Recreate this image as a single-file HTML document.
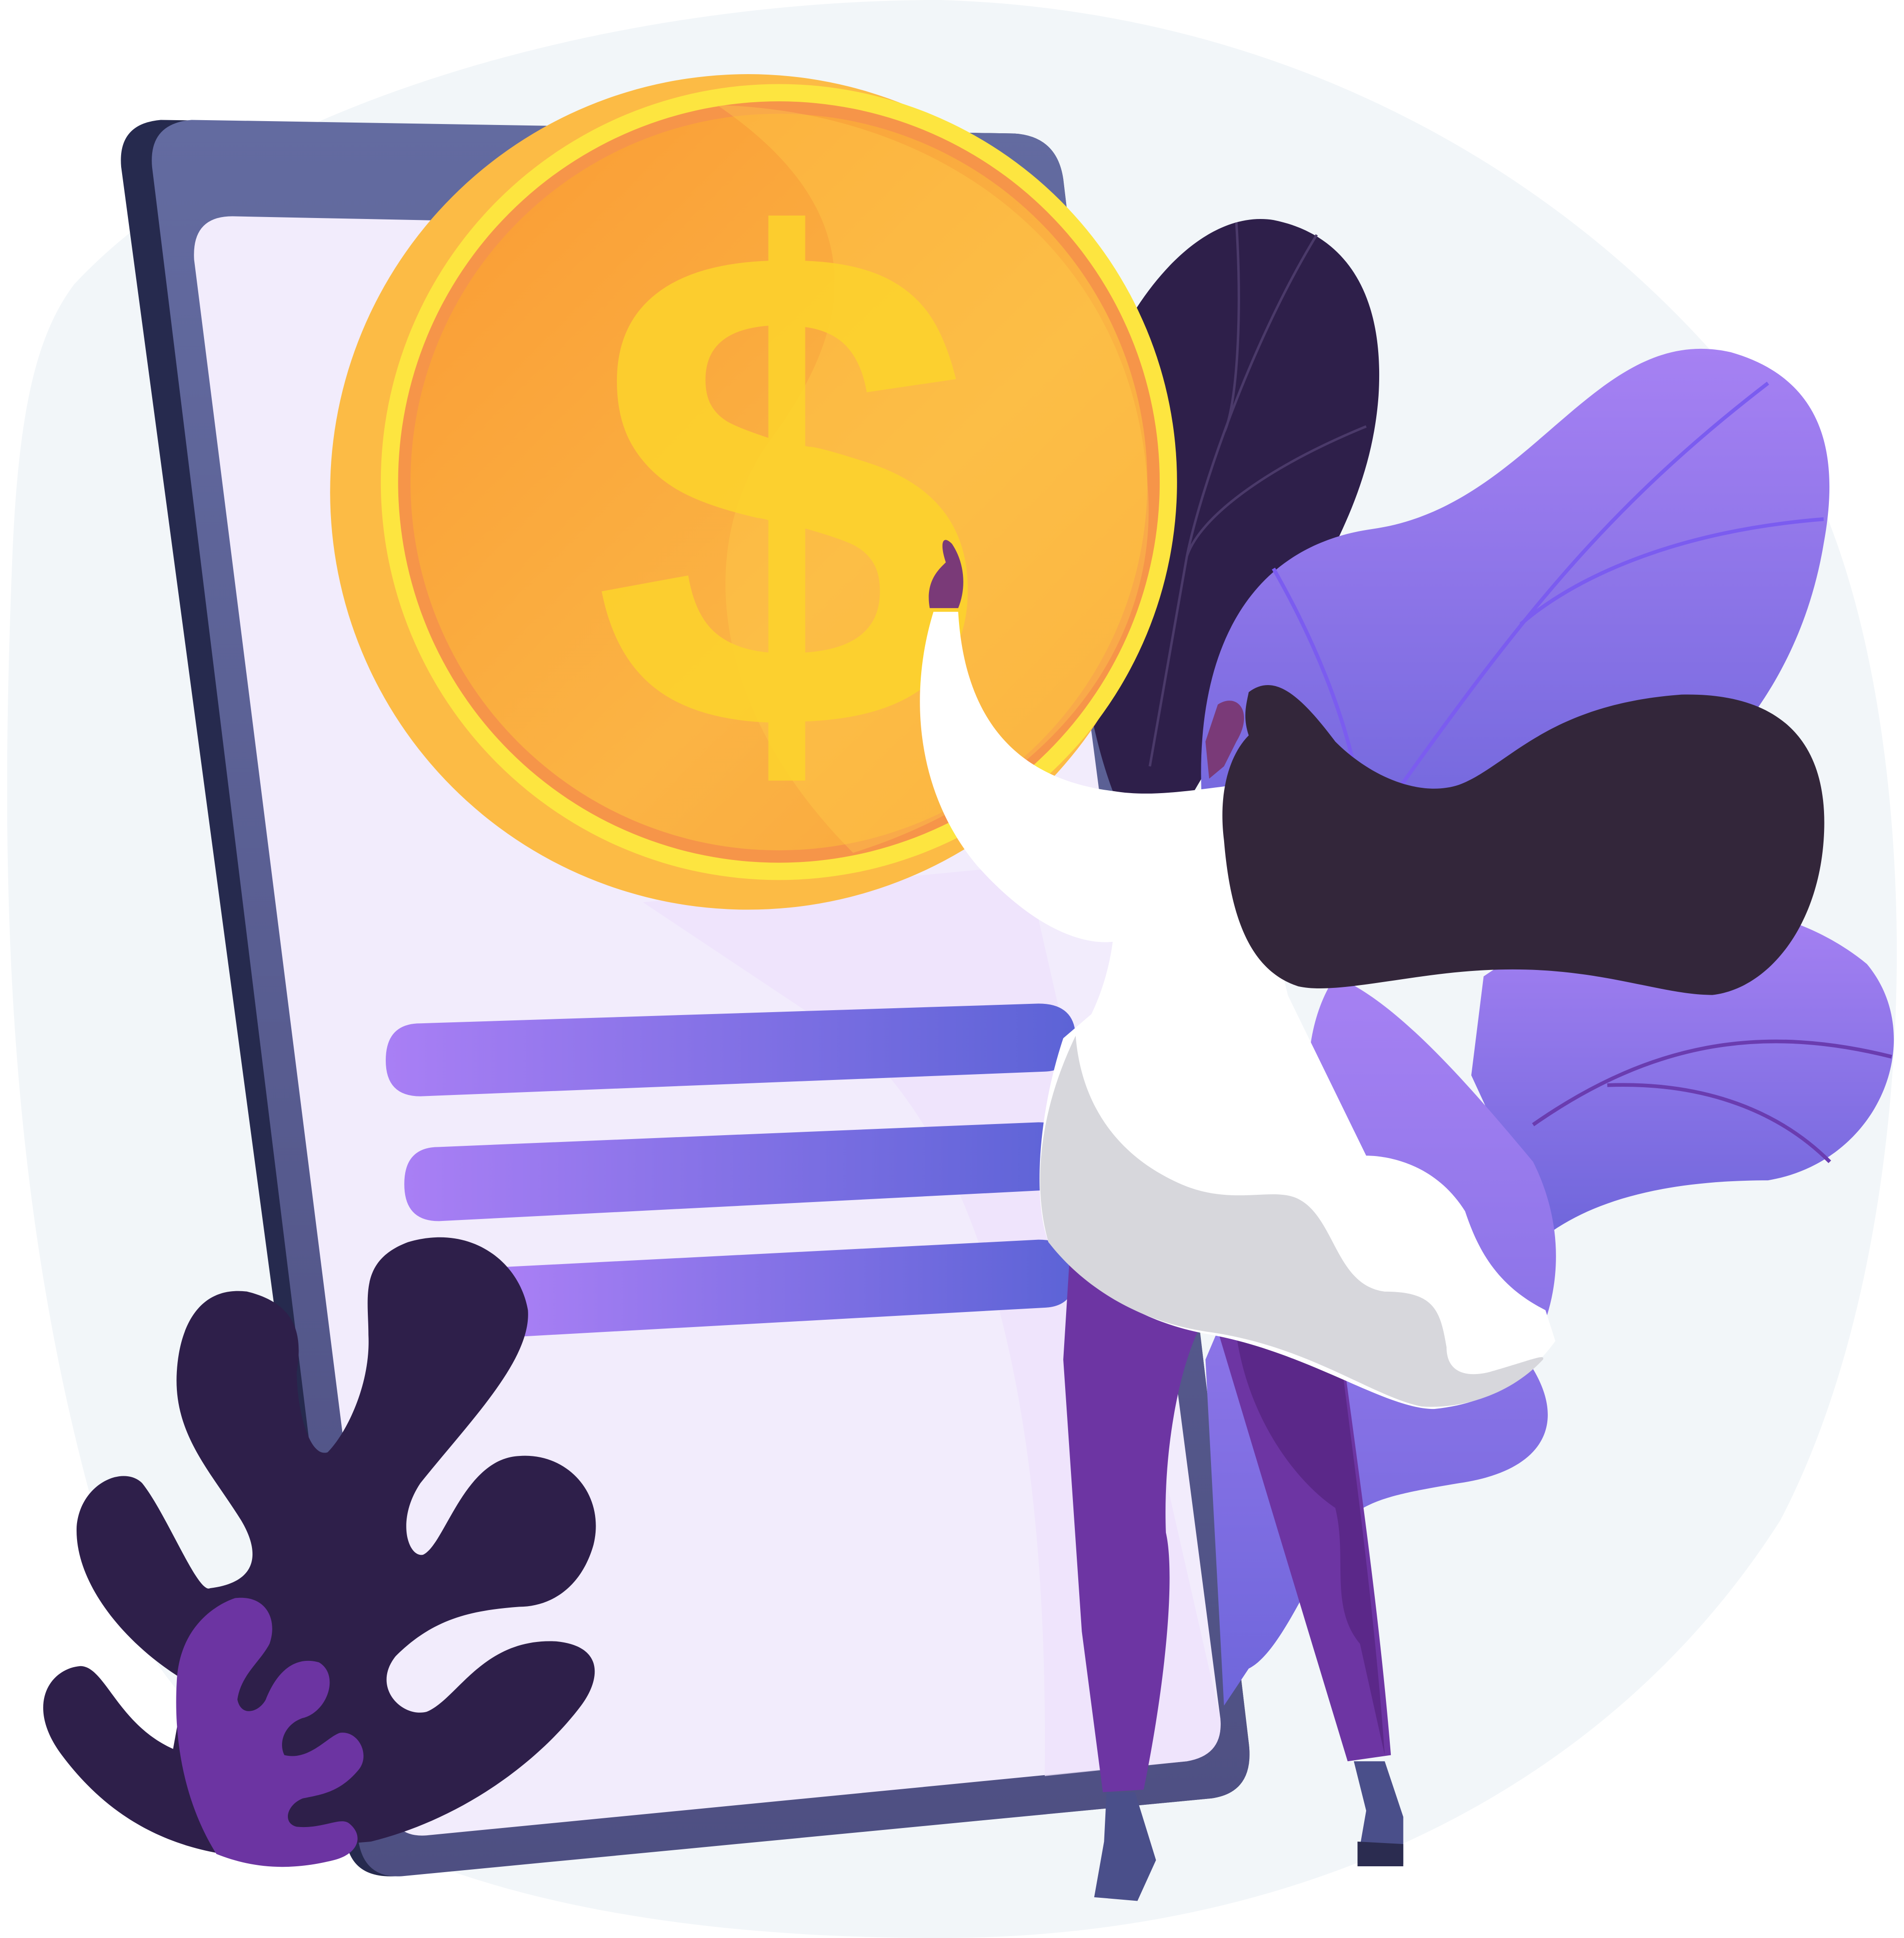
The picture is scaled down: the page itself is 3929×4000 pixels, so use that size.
<!DOCTYPE html>
<html><head><meta charset="utf-8"><style>
html,body{margin:0;padding:0;background:#fff;}
svg{display:block;width:3929px;height:4000px;}
</style></head><body>
<svg viewBox="0 0 1540 1568" preserveAspectRatio="none" xmlns="http://www.w3.org/2000/svg">
<defs>
<linearGradient id="bar" x1="0" x2="1"><stop offset="0" stop-color="#a97ff5"/><stop offset="1" stop-color="#5c63d6"/></linearGradient>
<linearGradient id="leaf" x1="0" y1="0" x2="0" y2="1"><stop offset="0" stop-color="#a681f3"/><stop offset="1" stop-color="#6f66db"/></linearGradient>
<linearGradient id="coin" x1="0" y1="0" x2="1" y2="1"><stop offset="0" stop-color="#f99a34"/><stop offset="0.6" stop-color="#fbb444"/><stop offset="1" stop-color="#f8a33c"/></linearGradient>
<linearGradient id="body" x1="0" y1="0" x2="0" y2="1"><stop offset="0" stop-color="#636ba0"/><stop offset="1" stop-color="#4e4f82"/></linearGradient>
</defs>
<rect width="1540" height="1568" fill="#fff"/>
<path d="M60 230 C200 80 500 0 760 0 C1100 10 1350 200 1470 400 C1560 600 1560 1000 1440 1230 C1300 1450 1050 1568 760 1568 C450 1568 200 1500 100 1300 C0 1000 0 700 10 450 C15 330 30 270 60 230Z" fill="#f2f6f9"/>
<!-- phone -->
<path d="M130 97 L820 108 Q855 110 860 145 L1010 1410 Q1015 1450 980 1455 L320 1518 Q285 1520 280 1490 L98 135 Q95 100 130 97Z" fill="#262a4e"/>
<path d="M155 97 L820 108 Q855 110 860 145 L1010 1410 Q1015 1450 980 1455 L325 1518 Q295 1520 290 1490 L123 135 Q120 100 155 97Z" fill="url(#body)"/>
<path d="M188 175 L830 188 L987 1390 Q990 1420 960 1425 L345 1485 Q318 1487 315 1460 L157 210 Q155 175 188 175Z" fill="#f2ecfc"/>
<path d="M520 730 L830 700 L987 1390 Q990 1420 960 1425 L845 1437 Q850 1000 700 850Z" fill="#ede2fb" opacity="0.8"/>
<!-- bars -->
<path d="M340 828 L840 812 Q870 812 870 840 Q870 866 845 867 L340 887 Q312 887 312 858 Q312 828 340 828Z" fill="url(#bar)"/>
<path d="M355 928 L840 908 Q870 908 870 935 Q870 962 845 963 L355 988 Q327 988 327 958 Q327 928 355 928Z" fill="url(#bar)"/>
<path d="M410 1025 L840 1003 Q870 1003 870 1030 Q870 1057 845 1058 L410 1082Z" fill="url(#bar)"/>
<!-- dark back leaf (behind coin) -->
<path d="M880 330 C920 220 980 170 1030 178 C1090 190 1120 240 1115 320 C1110 390 1080 440 1060 480 L960 650 L900 640 C870 560 860 430 880 330Z" fill="#2e1f4a"/>
<path d="M1000 180 C1005 260 1000 330 990 350 M1065 190 C1010 280 970 400 960 450 M1105 345 C1020 380 970 420 960 450 L930 620" stroke="#4b3a6a" stroke-width="2" fill="none"/>
<!-- coin -->
<circle cx="605" cy="398" r="338" fill="#fcbb45"/>
<circle cx="630" cy="390" r="322" fill="#fde540"/>
<circle cx="630" cy="390" r="308" fill="#f69549"/>
<circle cx="630" cy="390" r="298" fill="url(#coin)"/>
<path d="M580 85 C720 180 680 280 620 360 C560 450 580 580 690 690 C850 640 940 520 928 390 C915 200 760 90 580 85Z" fill="#ffd24a" opacity="0.35"/>
<text x="635" y="590" text-anchor="middle" font-family="Liberation Sans, sans-serif" font-weight="bold" font-size="560" fill="#fdd42c" opacity="0.85">$</text>
<!-- purple leaves -->
<path d="M1110 428 C1240 410 1290 260 1400 285 C1470 305 1490 360 1475 440 C1455 560 1380 630 1330 660 L1130 700 L975 680 C960 560 990 445 1110 428Z" fill="url(#leaf)"/>
<path d="M1430 310 C1300 410 1230 500 1130 640 M1475 420 C1350 430 1270 470 1230 505 M1030 460 C1070 530 1095 600 1100 650" stroke="#7b5cf0" stroke-width="3" fill="none"/>
<path d="M1200 790 C1330 700 1450 730 1510 780 C1560 840 1520 940 1430 955 C1350 955 1290 970 1250 1000 L1190 870Z" fill="url(#leaf)"/>
<path d="M1530 855 C1430 830 1340 840 1240 910 M1300 878 C1380 875 1440 900 1480 940" stroke="#6a3cb0" stroke-width="3" fill="none"/>
<path d="M1080 790 C1130 810 1190 880 1240 940 C1270 1000 1260 1060 1235 1100 C1270 1150 1250 1190 1180 1200 C1120 1210 1100 1215 1080 1240 C1050 1300 1030 1340 1010 1350 L990 1380 L975 1100 L1060 900 C1055 860 1060 820 1080 790Z" fill="url(#leaf)"/>
<!-- woman pants -->
<path d="M865 1020 L860 1100 L875 1320 L892 1450 L925 1448 C945 1350 950 1270 943 1240 C940 1160 960 1080 980 1060 C1010 1160 1040 1260 1090 1425 L1125 1420 C1115 1300 1100 1200 1080 1050Z" fill="#6d35a3"/>
<path d="M1000 1080 C1010 1150 1050 1200 1080 1220 C1090 1260 1075 1300 1100 1330 L1120 1420 C1110 1280 1090 1150 1080 1060Z" fill="#5b2889"/>
<path d="M895 1450 L893 1490 L885 1535 L920 1538 L935 1505 L918 1450Z" fill="#4a4f8a"/>
<path d="M1095 1425 L1105 1465 L1098 1505 L1135 1508 L1135 1470 L1120 1425Z" fill="#4a4f8a"/>
<path d="M1098 1490 L1135 1492 L1135 1510 L1098 1510Z" fill="#2b2c50"/>
<!-- arm + shirt -->
<path d="M755 495 C735 560 740 640 790 700 C830 745 870 765 900 762 C895 800 880 830 865 850 L1060 880 L1000 635 C960 640 930 645 900 640 C820 630 780 580 775 495Z" fill="#ffffff"/>
<path d="M860 840 C840 900 835 970 848 1005 C880 1040 920 1070 980 1080 C1060 1095 1120 1140 1160 1140 C1210 1135 1240 1110 1258 1085 L1250 1060 C1210 1040 1195 1010 1185 980 C1160 940 1120 935 1105 935 L1000 720 Z" fill="#ffffff"/>
<path d="M870 838 C875 900 910 940 960 960 C1000 975 1030 960 1050 970 C1080 985 1080 1040 1120 1045 C1160 1045 1165 1060 1170 1090 C1170 1110 1185 1115 1205 1110 C1240 1100 1250 1095 1248 1100 C1220 1130 1180 1140 1150 1138 C1110 1130 1060 1090 980 1078 C920 1070 875 1040 848 1005 C835 960 840 900 870 838Z" fill="#d7d7dc"/>
<path d="M752 492 C748 470 760 460 765 455 C760 440 762 432 770 440 C780 455 782 475 775 492Z" fill="#7a3a78"/>
<path d="M985 570 C1000 560 1015 575 1000 600 L990 620 L978 630 L975 600Z" fill="#7a3a78"/>
<!-- hair -->
<path d="M1010 560 C1030 545 1050 560 1080 600 C1110 630 1150 645 1180 635 C1220 620 1250 570 1360 562 C1450 560 1480 610 1475 680 C1470 750 1430 800 1385 805 C1340 805 1290 780 1200 785 C1140 788 1080 805 1050 798 C1010 785 995 740 990 680 C985 640 995 610 1010 595 C1005 580 1008 570 1010 560Z" fill="#33263a"/>
<!-- front dark leaf -->
<path d="M200 1045 C240 1055 245 1080 240 1110 C240 1140 250 1180 265 1175 C280 1160 300 1120 298 1080 C298 1050 290 1020 330 1005 C380 990 420 1020 427 1060 C430 1100 380 1150 340 1200 C320 1230 330 1260 342 1258 C360 1250 375 1180 420 1178 C460 1175 490 1210 480 1250 C470 1285 445 1300 420 1300 C380 1303 350 1310 320 1340 C300 1365 325 1390 345 1385 C370 1375 390 1325 450 1328 C490 1332 485 1360 470 1380 C440 1420 380 1470 300 1490 L180 1500 C120 1490 80 1460 50 1420 C20 1380 40 1350 65 1348 C85 1348 95 1395 140 1415 L150 1360 C100 1330 60 1280 62 1235 C65 1200 100 1185 115 1200 C135 1225 160 1290 170 1285 C210 1280 210 1255 195 1230 C170 1190 140 1160 143 1110 C145 1075 160 1040 200 1045Z" fill="#2e1f4a"/>
<path d="M175 1500 C150 1460 140 1410 143 1360 C145 1320 170 1300 190 1293 C215 1290 225 1310 218 1330 C210 1345 195 1355 192 1375 C195 1390 210 1385 215 1375 C225 1350 240 1340 258 1345 C275 1355 265 1385 245 1390 C230 1395 225 1410 230 1420 C250 1425 265 1405 275 1402 C290 1400 300 1420 290 1432 C275 1450 260 1452 245 1455 C232 1460 228 1475 240 1478 C260 1480 275 1470 282 1475 C295 1485 290 1500 270 1505 C230 1515 200 1510 175 1500Z" fill="#6c34a2"/>
</svg>
</body></html>
